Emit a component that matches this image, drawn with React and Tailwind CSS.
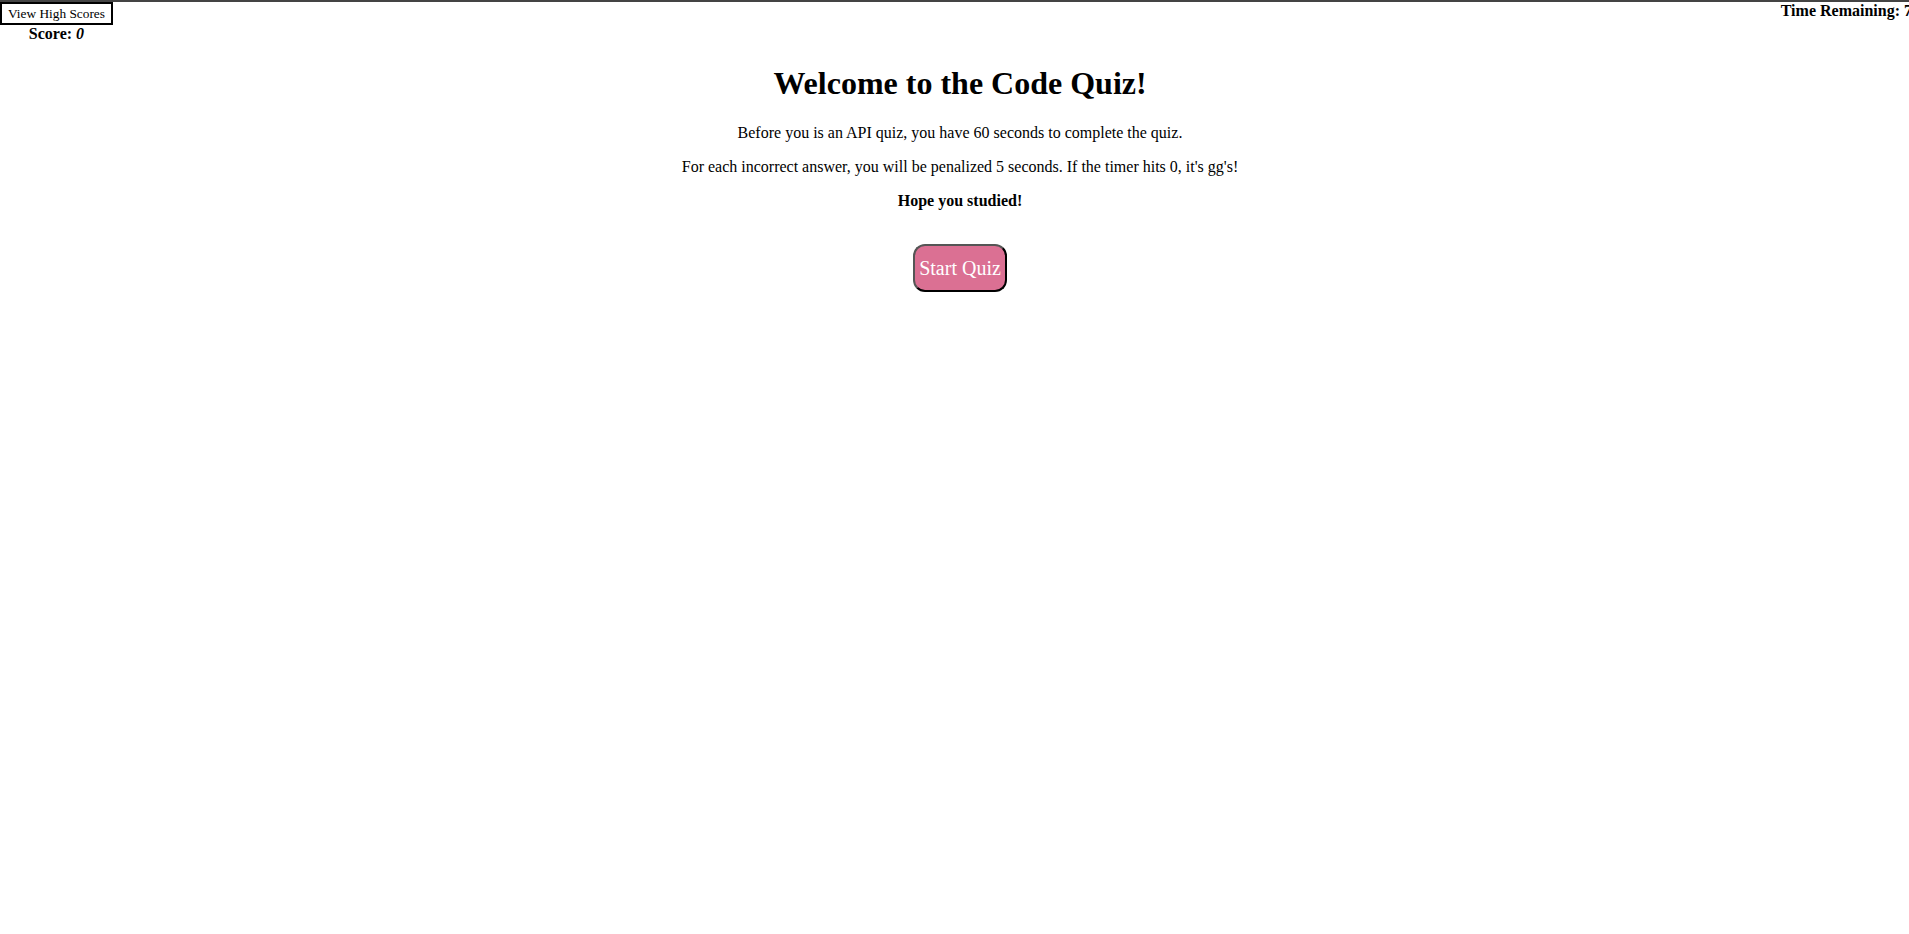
export default function App() {
  return (
    <div className="min-h-screen bg-white text-black font-['Liberation_Serif','Times_New_Roman',serif] overflow-hidden">
      <div className="h-[2px] bg-[#444]" />
      <header className="flex justify-between items-start">
        <div className="flex flex-col items-center">
          <button className="border-2 border-black bg-white px-[6px] text-[13.33px] leading-[18px] h-[23px] font-['Liberation_Serif',serif]">
            View High Scores
          </button>
          <div className="font-bold text-[16px] leading-[18px]">
            Score: <i>0</i>
          </div>
        </div>
        <div className="font-bold text-[16px] leading-[18px] shrink-0 whitespace-nowrap mr-[-11px]">
          Time Remaining: 75
        </div>
      </header>
      <main className="text-center pl-[11px]">
        <h1 className="text-[32px] font-bold leading-[37px] my-[22px]">Welcome to the Code Quiz!</h1>
        <p className="text-[16px] leading-[18px] my-[16px]">
          Before you is an API quiz, you have 60 seconds to complete the quiz.
        </p>
        <p className="text-[16px] leading-[18px] my-[16px]">
          For each incorrect answer, you will be penalized 5 seconds. If the timer hits 0, it's gg's!
        </p>
        <p className="text-[16px] leading-[18px] my-[16px] font-bold">Hope you studied!</p>
        <button className="mt-[18px] w-[94px] h-[48px] rounded-[12px] border-2 border-t-[#555] border-l-[#555] border-b-black border-r-black bg-[#db7093] text-white text-[20px] leading-[24px]">
          Start Quiz
        </button>
      </main>
    </div>
  );
}
